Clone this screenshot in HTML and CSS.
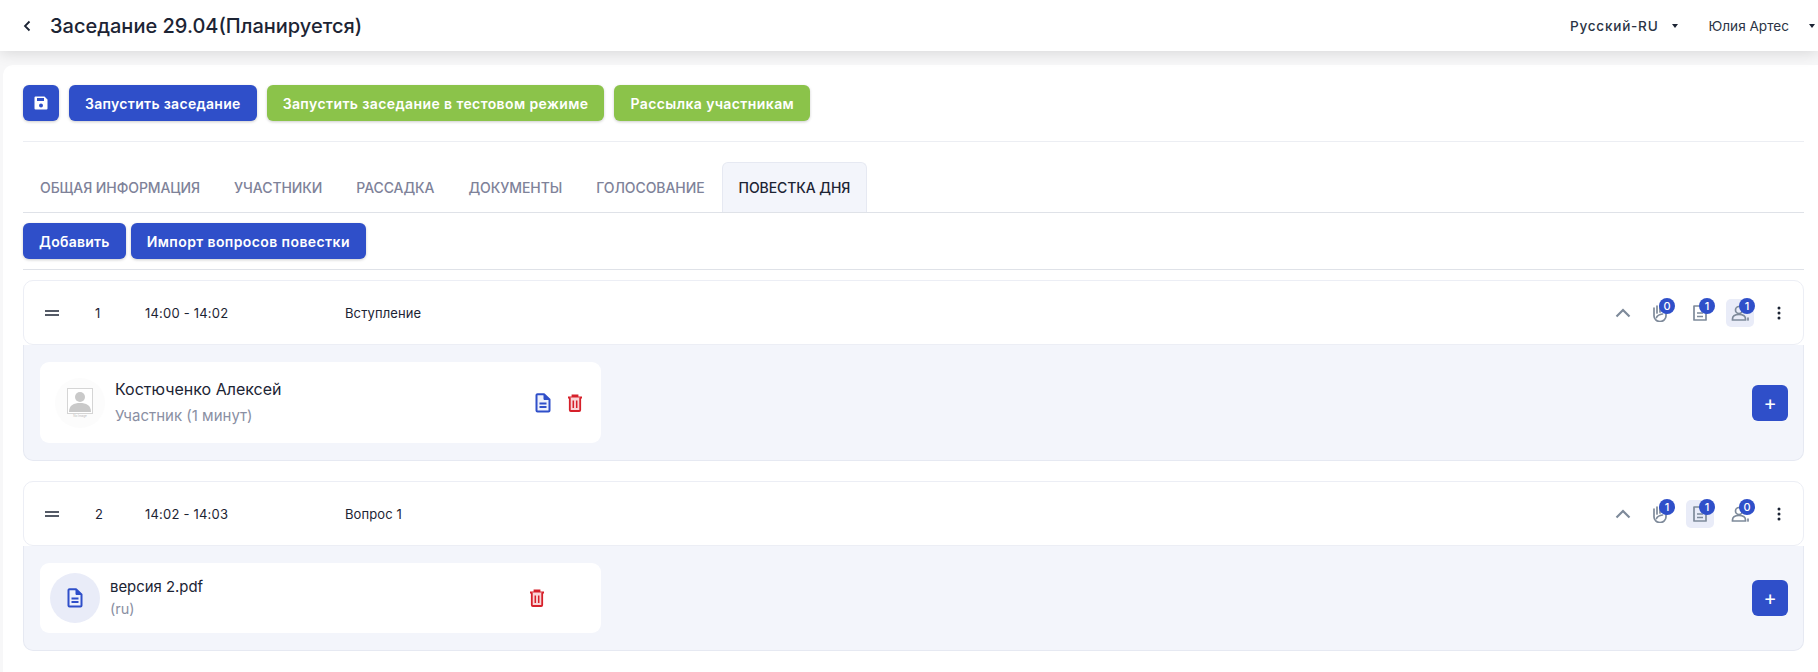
FILE: index.html
```html
<!DOCTYPE html>
<html lang="ru">
<head>
<meta charset="utf-8">
<title>Заседание 29.04</title>
<link rel="stylesheet" href="styles.css">
</head>
<body>
<header class="topbar">
  <div class="topbar-left">
    <svg class="back" viewBox="0 0 10 14" width="10" height="14"><path d="M7.500 2.500 3 7l4.500 4.500" fill="none" stroke="#1c2434" stroke-width="1.800"/></svg>
    <h1 class="title">Заседание 29.04(Планируется)</h1>
  </div>
  <div class="topbar-right">
    <span class="lang">Русский-RU</span><span class="caret lang-caret"></span>
    <span class="user">Юлия Артес</span><span class="caret user-caret"></span>
  </div>
</header>
<main class="content">
  <div class="toolbar">
    <button class="btn btn-blue btn-save" aria-label="save">
      <svg viewBox="0 0 16 16" width="16" height="16"><path d="M2.500 1.500h9L14.500 4.500v9a1 1 0 0 1-1 1h-11a1 1 0 0 1-1-1v-11a1 1 0 0 1 1-1z" fill="#fff"/><rect x="4" y="3" width="7" height="3" fill="#2f4fc9"/><circle cx="8" cy="10.500" r="2" fill="#2f4fc9"/></svg>
    </button>
    <button class="btn btn-blue btn-start">Запустить заседание</button>
    <button class="btn btn-green btn-test">Запустить заседание в тестовом режиме</button>
    <button class="btn btn-green btn-mail">Рассылка участникам</button>
  </div>
  <nav class="tabs">
    <a class="tab">ОБЩАЯ ИНФОРМАЦИЯ</a>
    <a class="tab">УЧАСТНИКИ</a>
    <a class="tab">РАССАДКА</a>
    <a class="tab">ДОКУМЕНТЫ</a>
    <a class="tab">ГОЛОСОВАНИЕ</a>
    <a class="tab tab-active">ПОВЕСТКА ДНЯ</a>
  </nav>
  <div class="actions">
    <button class="btn btn-blue btn-add">Добавить</button>
    <button class="btn btn-blue btn-import">Импорт вопросов повестки</button>
  </div>

  <section class="item">
    <div class="row">
      <svg class="drag" viewBox="0 0 14 6" width="14" height="6"><path d="M0 1h14M0 5h14" stroke="#1c2434" stroke-width="1.600"/></svg>
      <span class="num">1</span>
      <span class="time">14:00 - 14:02</span>
      <span class="name">Вступление</span>
      <div class="tools">
        <svg class="chev" viewBox="0 0 16 10" width="16" height="10"><path d="M1.500 8.500 8 2l6.500 6.500" fill="none" stroke="#7e8a9a" stroke-width="2.200"/></svg>
        <span class="tool"><svg viewBox="0 0 18 18" width="18" height="18"><use href="#i-hand"/></svg><b class="badge">0</b></span>
        <span class="tool"><svg viewBox="0 0 18 18" width="18" height="18"><use href="#i-doc"/></svg><b class="badge">1</b></span>
        <span class="tool tool-on"><svg viewBox="0 0 18 18" width="18" height="18"><use href="#i-user"/></svg><b class="badge">1</b></span>
        <svg class="dots" viewBox="0 0 4 14" width="4" height="14"><circle cx="2" cy="2" r="1.500"/><circle cx="2" cy="7" r="1.500"/><circle cx="2" cy="12" r="1.500"/></svg>
      </div>
    </div>
    <div class="panel panel-speaker">
      <div class="entry entry-speaker">
        <div class="avatar">
          <svg viewBox="0 0 26 26" width="26" height="26"><rect x=".5" y=".5" width="25" height="25" fill="#fff" stroke="#d5d5d5"/><circle cx="13" cy="9" r="5" fill="#c9c9c9"/><path d="M2 24c0-7 5-9 11-9s11 2 11 9z" fill="#c9c9c9"/></svg>
          <span class="noimg">No Image</span>
        </div>
        <div class="entry-text">
          <div class="entry-title">Костюченко Алексей</div>
          <div class="entry-sub">Участник (1 минут)</div>
        </div>
        <div class="entry-acts">
          <svg viewBox="0 0 16 20" width="16" height="20"><use href="#i-file"/></svg>
          <svg viewBox="0 0 16 18" width="16" height="18"><use href="#i-trash"/></svg>
        </div>
      </div>
      <button class="btn btn-blue btn-plus">+</button>
    </div>
  </section>

  <section class="item">
    <div class="row">
      <svg class="drag" viewBox="0 0 14 6" width="14" height="6"><path d="M0 1h14M0 5h14" stroke="#1c2434" stroke-width="1.600"/></svg>
      <span class="num">2</span>
      <span class="time">14:02 - 14:03</span>
      <span class="name">Вопрос 1</span>
      <div class="tools">
        <svg class="chev" viewBox="0 0 16 10" width="16" height="10"><path d="M1.500 8.500 8 2l6.500 6.500" fill="none" stroke="#7e8a9a" stroke-width="2.200"/></svg>
        <span class="tool"><svg viewBox="0 0 18 18" width="18" height="18"><use href="#i-hand"/></svg><b class="badge">1</b></span>
        <span class="tool tool-on"><svg viewBox="0 0 18 18" width="18" height="18"><use href="#i-doc"/></svg><b class="badge">1</b></span>
        <span class="tool"><svg viewBox="0 0 18 18" width="18" height="18"><use href="#i-user"/></svg><b class="badge">0</b></span>
        <svg class="dots" viewBox="0 0 4 14" width="4" height="14"><circle cx="2" cy="2" r="1.500"/><circle cx="2" cy="7" r="1.500"/><circle cx="2" cy="12" r="1.500"/></svg>
      </div>
    </div>
    <div class="panel panel-doc">
      <div class="entry entry-doc">
        <div class="doc-circle"><svg viewBox="0 0 16 20" width="16" height="20"><use href="#i-file"/></svg></div>
        <div class="entry-text">
          <div class="entry-title entry-title-doc">версия 2.pdf</div>
          <div class="entry-sub entry-sub-doc">(ru)</div>
        </div>
        <div class="entry-acts entry-acts-doc">
          <svg viewBox="0 0 16 18" width="16" height="18"><use href="#i-trash"/></svg>
        </div>
      </div>
      <button class="btn btn-blue btn-plus">+</button>
    </div>
  </section>
</main>

<svg class="defs" width="0" height="0">
  <defs>
    <g id="i-hand" fill="none" stroke="#7e8a9a" stroke-width="1.700" stroke-linecap="round" stroke-linejoin="round">
      <path d="M3 4v8a6 5.500 0 0 0 12 0V4"/><path d="M6 2v7M9 2v6M5.500 13.500c1-2.500 3-3 6-3.500"/>
    </g>
    <g id="i-doc" fill="none" stroke="#7e8a9a" stroke-width="1.700" stroke-linejoin="round">
      <path d="M3 2h9l3 3v11H3z"/><path d="M6 9h6M6 12.500h6"/>
    </g>
    <g id="i-user" fill="none" stroke="#7e8a9a" stroke-width="1.700" stroke-linecap="round">
      <circle cx="8" cy="6" r="3.500"/><path d="M1.500 16v-1c0-3 3-4.500 6.500-4.500S14.500 12 14.500 15v1zM17 16v-2"/>
    </g>
    <g id="i-file">
      <path d="M2.500 1.200h6.500L14.500 6.500V17.500a1 1 0 0 1-1 1H2.500a1 1 0 0 1-1-1V2.200a1 1 0 0 1 1-1z" fill="#eef1fc" stroke="#2f4fc9" stroke-width="2" stroke-linejoin="round"/>
      <path d="M9 1.500v5h5z" fill="#2f4fc9" stroke="#2f4fc9"/>
      <path d="M4.500 10.500h7M4.500 14h7" stroke="#2f4fc9" stroke-width="2"/>
    </g>
    <g id="i-trash">
      <path d="M1 3.500h14M5.500 3.500V1.500h5v2" fill="none" stroke="#d6202a" stroke-width="1.800"/>
      <path d="M2.800 3.500V16a1 1 0 0 0 1 1h8.400a1 1 0 0 0 1-1V3.500" fill="#f9d5d7" stroke="#d6202a" stroke-width="1.800"/>
      <path d="M6.300 6.500v7.500M9.700 6.500v7.500" stroke="#d6202a" stroke-width="1.500"/>
    </g>
  </defs>
</svg>
</body>
</html>
```

FILE: styles.css
```css
* { box-sizing: border-box; }
html, body { margin: 0; padding: 0; }
body {
  background: #f7f7f8;
  font-family: Inter, "Noto Sans", sans-serif;
  color: #181c32;
  height: 672px;
  overflow: hidden;
}
.defs { position: absolute; }
.topbar {
  height: 51px;
  background: #fff;
  box-shadow: 0 2px 14px rgba(0,0,0,.13);
  display: flex;
  align-items: center;
  justify-content: space-between;
  position: relative;
  padding-left: 22px;
}
.topbar-left { display: flex; align-items: center; gap: 18px; }
.title { margin: 0; font-size: 20px; font-weight: 500; color: #1c2434; line-height: 1; }
.topbar-right { display: flex; align-items: center; font-size: 13.6px; color: #2b3445; }
.lang { letter-spacing: .75px; font-weight: 500; }
.user { margin-left: 30px; }
.caret {
  width: 0; height: 0;
  border-left: 3.5px solid transparent;
  border-right: 3.5px solid transparent;
  border-top: 4px solid #1c2434;
}
.lang-caret { margin-left: 14px; }
.user-caret { margin-left: 20px; margin-right: 3px; }

.content {
  margin: 14px 0 0 3px;
  background: #fff;
  border-radius: 10px 0 0 0;
  padding: 20px 14px 0 20px;
  height: 607px;
}
.toolbar {
  display: flex;
  gap: 10px;
  padding-bottom: 20px;
  border-bottom: 1px solid #eceef3;
}
.btn {
  height: 36px;
  border: 0;
  border-radius: 6px;
  font-family: inherit;
  font-size: 14px;
  font-weight: 600;
  letter-spacing: .4px;
  color: #fff;
  padding: 0 16px;
  box-shadow: 0 1px 3px rgba(0,0,0,.2);
  white-space: nowrap;
}
.btn-blue { background: #2f4fc9; }
.btn-green { background: #8bc34a; }
.btn-start { letter-spacing: .3px; }
.btn-add { letter-spacing: .25px; }
.btn-save { width: 36px; padding: 0; display: flex; align-items: center; justify-content: center; }
.tabs {
  display: flex;
  margin-top: 20px;
  height: 51px;
  border-bottom: 1px solid #dfe2e8;
}
.tab {
  height: 50px;
  padding: 0 16px;
  display: flex;
  align-items: center;
  font-size: 14px;
  font-weight: 500;
  letter-spacing: -.08px;
  color: #7e8299;
  border: 1px solid transparent;
  border-bottom: 0;
  border-radius: 6px 6px 0 0;
}
.tab-active { background: #f3f5fb; color: #1c2434; border-color: #e6e9f2; }
.actions {
  display: flex;
  gap: 5px;
  margin-top: 10px;
  padding-bottom: 10px;
  border-bottom: 1px solid #dfe2e8;
}
.item { margin-top: 20px; }
.actions + .item { margin-top: 10px; }
.row {
  height: 65px;
  display: flex;
  align-items: center;
  background: #fff;
  border: 1px solid #eceef5;
  border-radius: 10px;
  font-size: 13px;
  letter-spacing: .1px;
  color: #1c2434;
  padding-left: 21px;
}
.drag { flex: none; }
.num { width: 14px; margin-left: 36px; flex: none; }
.time { width: 200px; margin-left: 36px; flex: none; letter-spacing: .2px; }
.name { flex: 1; }
.tools { display: flex; align-items: center; gap: 12px; padding-right: 22px; }
.chev { margin-right: 3px; }
.tool {
  width: 28px; height: 28px;
  border-radius: 5px;
  display: flex; align-items: center; justify-content: center;
  position: relative;
}
.tool-on { background: #e9ecf8; }
.badge {
  position: absolute;
  top: -1px; right: -1px;
  width: 16px; height: 16px;
  border-radius: 50%;
  background: #2f4fc9;
  color: #fff;
  font-size: 11px;
  font-weight: 500;
  line-height: 16px;
  text-align: center;
}
.dots { margin-left: 11px; fill: #1c2434; }
.panel {
  display: flex;
  align-items: center;
  justify-content: space-between;
  background: #f3f5fb;
  border: 1px solid #e6e9f2;
  border-top: 0;
  border-radius: 0 0 10px 10px;
  padding: 17px 15px 17px 16px;
}
.entry {
  width: 561px;
  background: #fff;
  border-radius: 9px;
  display: flex;
  align-items: center;
}
.entry-speaker { height: 81px; padding: 0 18px 0 15px; }
.entry-doc { height: 70px; padding: 0 56px 0 10px; }
.avatar {
  width: 50px; height: 50px;
  border-radius: 50%;
  background: #fcfcfc;
  display: flex; flex-direction: column; align-items: center; justify-content: center;
  flex: none;
  margin-right: 10px;
  padding-top: 2px;
}
.noimg { font-size: 3px; color: #bbb; line-height: 5px; }
.doc-circle {
  width: 50px; height: 50px;
  border-radius: 50%;
  background: #e9ecf8;
  display: flex; align-items: center; justify-content: center;
  flex: none;
  margin-right: 10px;
}
.entry-title { font-size: 16px; font-weight: 400; color: #1c2434; line-height: 19px; }
.entry-title-doc { font-size: 14.900px; line-height: 18px; }
.entry-sub { font-size: 15px; color: #8a8fa3; line-height: 18px; margin-top: 8px; }
.entry-sub-doc { font-size: 14.500px; margin-top: 4px; }
.entry-acts { margin-left: auto; display: flex; align-items: center; gap: 16px; }
.btn-plus { width: 36px; padding: 0; font-size: 20px; font-weight: 400; letter-spacing: 0; box-shadow: none; }
```
